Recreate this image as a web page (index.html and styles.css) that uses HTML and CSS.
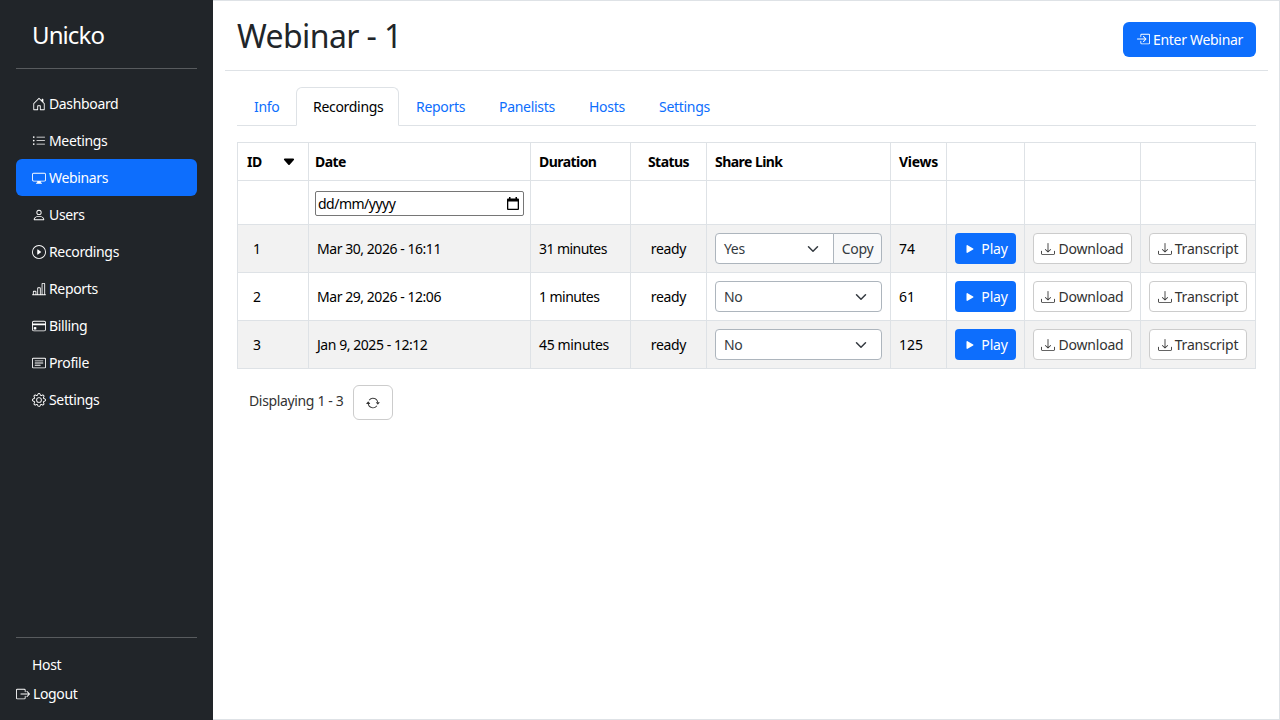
FILE: index.html
```html
<!DOCTYPE html>
<html lang="en">
<head>
<meta charset="utf-8">
<title>Unicko</title>
<link rel="stylesheet" href="styles.css">
</head>
<body>
<svg class="defs" width="0" height="0">
<symbol id="house" viewBox="0 0 16 16"><path d="M8.354 1.146a.5.5 0 0 0-.708 0l-6 6A.5.5 0 0 0 1.5 7.5v7a.5.5 0 0 0 .5.5h4.500a.5.5 0 0 0 .5-.5v-4h2v4a.5.5 0 0 0 .5.5H14a.5.5 0 0 0 .5-.5v-7a.5.5 0 0 0-.146-.354L13 5.793V2.500a.5.5 0 0 0-.5-.5h-1a.5.5 0 0 0-.5.5v1.293zM2.500 14V7.707l5.500-5.500 5.500 5.500V14H10v-4a.5.5 0 0 0-.5-.5h-3a.5.5 0 0 0-.5.5v4z"/></symbol>
<symbol id="list" viewBox="0 0 16 16"><path d="M5 11.500a.5.5 0 0 1 .5-.5h9a.5.5 0 0 1 0 1h-9a.5.5 0 0 1-.5-.5m0-4a.5.5 0 0 1 .5-.5h9a.5.5 0 0 1 0 1h-9a.5.5 0 0 1-.5-.5m0-4a.5.5 0 0 1 .5-.5h9a.5.5 0 0 1 0 1h-9a.5.5 0 0 1-.5-.5m-3 1a1 1 0 1 0 0-2 1 1 0 0 0 0 2m0 4a1 1 0 1 0 0-2 1 1 0 0 0 0 2m0 4a1 1 0 1 0 0-2 1 1 0 0 0 0 2"/></symbol>
<symbol id="display" viewBox="0 0 16 16"><path d="M0 4s0-2 2-2h12s2 0 2 2v6s0 2-2 2h-4q0 1 .25 1.500H11a.5.5 0 0 1 0 1H5a.5.5 0 0 1 0-1h.75Q6 13 6 12H2s-2 0-2-2zm1.398-.855a.76.76 0 0 0-.254.302A1.460 1.460 0 0 0 1 4.010V10c0 .325.078.502.145.602q.105.156.302.254a1.500 1.500 0 0 0 .538.143L2.010 11H14c.325 0 .502-.078.602-.145a.76.76 0 0 0 .254-.302 1.460 1.460 0 0 0 .143-.538L15 9.990V4c0-.325-.078-.502-.145-.602a.76.76 0 0 0-.302-.254A1.460 1.460 0 0 0 13.990 3H2c-.325 0-.502.078-.602.145"/></symbol>
<symbol id="person" viewBox="0 0 16 16"><path d="M8 8a3 3 0 1 0 0-6 3 3 0 0 0 0 6m2-3a2 2 0 1 1-4 0 2 2 0 0 1 4 0m4 8c0 1-1 1-1 1H3s-1 0-1-1 1-4 6-4 6 3 6 4m-1-.004c-.001-.246-.154-.986-.832-1.664C11.516 10.680 10.289 10 8 10s-3.516.68-4.168 1.332c-.678.678-.83 1.418-.832 1.664z"/></symbol>
<symbol id="playc" viewBox="0 0 16 16"><path d="M8 15A7 7 0 1 1 8 1a7 7 0 0 1 0 14m0 1A8 8 0 1 0 8 0a8 8 0 0 0 0 16"/><path d="M6.271 5.055a.5.5 0 0 1 .52.038l3.500 2.500a.5.5 0 0 1 0 .814l-3.500 2.500A.5.5 0 0 1 6 10.500v-5a.5.5 0 0 1 .271-.445"/></symbol>
<symbol id="bars" viewBox="0 0 16 16"><path d="M11 2a1 1 0 0 1 1-1h2a1 1 0 0 1 1 1v12h.5a.5.5 0 0 1 0 1H.5a.5.5 0 0 1 0-1H1v-3a1 1 0 0 1 1-1h2a1 1 0 0 1 1 1v3h1V7a1 1 0 0 1 1-1h2a1 1 0 0 1 1 1v7h1zm1 12h2V2h-2zm-3 0V7H7v7zm-5 0v-3H2v3z"/></symbol>
<symbol id="card" viewBox="0 0 16 16"><path d="M0 4a2 2 0 0 1 2-2h12a2 2 0 0 1 2 2v8a2 2 0 0 1-2 2H2a2 2 0 0 1-2-2zm2-1a1 1 0 0 0-1 1v1h14V4a1 1 0 0 0-1-1zm13 4H1v5a1 1 0 0 0 1 1h12a1 1 0 0 0 1-1z"/><path d="M2 10a1 1 0 0 1 1-1h1a1 1 0 0 1 1 1v1a1 1 0 0 1-1 1H3a1 1 0 0 1-1-1z"/></symbol>
<symbol id="text" viewBox="0 0 16 16"><path d="M14.500 3a.5.5 0 0 1 .5.5v9a.5.5 0 0 1-.5.5h-13a.5.5 0 0 1-.5-.5v-9a.5.5 0 0 1 .5-.5zm-13-1A1.500 1.500 0 0 0 0 3.500v9A1.500 1.500 0 0 0 1.500 14h13a1.500 1.500 0 0 0 1.500-1.500v-9A1.500 1.500 0 0 0 14.500 2z"/><path d="M3 5.500a.5.5 0 0 1 .5-.5h9a.5.5 0 0 1 0 1h-9a.5.5 0 0 1-.5-.5M3 8a.5.5 0 0 1 .5-.5h9a.5.5 0 0 1 0 1h-9A.5.5 0 0 1 3 8m0 2.500a.5.5 0 0 1 .5-.5h6a.5.5 0 0 1 0 1h-6a.5.5 0 0 1-.5-.5"/></symbol>
<symbol id="gear" viewBox="0 0 16 16"><path d="M8 4.754a3.246 3.246 0 1 0 0 6.492 3.246 3.246 0 0 0 0-6.492M5.754 8a2.246 2.246 0 1 1 4.492 0 2.246 2.246 0 0 1-4.492 0"/><path d="M9.796 1.343c-.527-1.790-3.065-1.790-3.592 0l-.094.319a.873.873 0 0 1-1.255.52l-.292-.16c-1.640-.892-3.433.902-2.540 2.541l.159.292a.873.873 0 0 1-.52 1.255l-.319.094c-1.790.527-1.790 3.065 0 3.592l.319.094a.873.873 0 0 1 .52 1.255l-.16.292c-.892 1.640.901 3.434 2.541 2.540l.292-.159a.873.873 0 0 1 1.255.52l.094.319c.527 1.790 3.065 1.790 3.592 0l.094-.319a.873.873 0 0 1 1.255-.52l.292.16c1.640.893 3.434-.902 2.540-2.541l-.159-.292a.873.873 0 0 1 .52-1.255l.319-.094c1.790-.527 1.790-3.065 0-3.592l-.319-.094a.873.873 0 0 1-.52-1.255l.16-.292c.893-1.640-.902-3.433-2.541-2.540l-.292.159a.873.873 0 0 1-1.255-.52zm-2.633.283c.246-.835 1.428-.835 1.674 0l.094.319a1.873 1.873 0 0 0 2.693 1.115l.291-.16c.764-.415 1.600.42 1.184 1.185l-.159.292a1.873 1.873 0 0 0 1.116 2.692l.318.094c.835.246.835 1.428 0 1.674l-.319.094a1.873 1.873 0 0 0-1.115 2.693l.16.291c.415.764-.42 1.600-1.185 1.184l-.291-.159a1.873 1.873 0 0 0-2.693 1.116l-.094.318c-.246.835-1.428.835-1.674 0l-.094-.319a1.873 1.873 0 0 0-2.692-1.115l-.292.16c-.764.415-1.600-.42-1.184-1.185l.159-.291A1.873 1.873 0 0 0 1.945 8.930l-.319-.094c-.835-.246-.835-1.428 0-1.674l.319-.094A1.873 1.873 0 0 0 3.060 4.377l-.16-.292c-.415-.764.42-1.600 1.185-1.184l.292.159a1.873 1.873 0 0 0 2.692-1.115z"/></symbol>
<symbol id="out" viewBox="0 0 16 16"><path d="M10 12.500a.5.5 0 0 1-.5.5h-8a.5.5 0 0 1-.5-.5v-9a.5.5 0 0 1 .5-.5h8a.5.5 0 0 1 .5.5v2a.5.5 0 0 0 1 0v-2A1.500 1.500 0 0 0 9.500 2h-8A1.500 1.500 0 0 0 0 3.500v9A1.500 1.500 0 0 0 1.500 14h8a1.500 1.500 0 0 0 1.500-1.500v-2a.5.5 0 0 0-1 0z"/><path d="M15.854 8.354a.5.5 0 0 0 0-.708l-3-3a.5.5 0 0 0-.708.708L14.293 7.500H5.500a.5.5 0 0 0 0 1h8.793l-2.147 2.146a.5.5 0 0 0 .708.708z"/></symbol>
<symbol id="in" viewBox="0 0 16 16"><path d="M6 3.500a.5.5 0 0 1 .5-.5h8a.5.5 0 0 1 .5.5v9a.5.5 0 0 1-.5.5h-8a.5.5 0 0 1-.5-.5v-2a.5.5 0 0 0-1 0v2A1.500 1.500 0 0 0 6.500 14h8a1.500 1.500 0 0 0 1.500-1.500v-9A1.500 1.500 0 0 0 14.500 2h-8A1.500 1.500 0 0 0 5 3.500v2a.5.5 0 0 0 1 0z"/><path d="M11.854 8.354a.5.5 0 0 0 0-.708l-3-3a.5.5 0 1 0-.708.708L10.293 7.500H1.500a.5.5 0 0 0 0 1h8.793l-2.147 2.146a.5.5 0 0 0 .708.708z"/></symbol>
<symbol id="play" viewBox="0 0 16 16"><path d="m11.596 8.697-6.363 3.692c-.54.313-1.233-.066-1.233-.697V4.308c0-.63.692-1.010 1.233-.696l6.363 3.692a.802.802 0 0 1 0 1.393"/></symbol>
<symbol id="down" viewBox="0 0 16 16"><path d="M.5 9.900a.5.5 0 0 1 .5.5v2.500a1 1 0 0 0 1 1h12a1 1 0 0 0 1-1v-2.500a.5.5 0 0 1 1 0v2.500a2 2 0 0 1-2 2H2a2 2 0 0 1-2-2v-2.500a.5.5 0 0 1 .5-.5"/><path d="M7.646 11.854a.5.5 0 0 0 .708 0l3-3a.5.5 0 0 0-.708-.708L8.500 10.293V1.500a.5.5 0 0 0-1 0v8.793L5.354 8.146a.5.5 0 1 0-.708.708z"/></symbol>
<symbol id="repeat" viewBox="0 0 16 16"><path d="M11.534 7h3.932a.25.25 0 0 1 .192.410l-1.966 2.360a.25.25 0 0 1-.384 0l-1.966-2.360a.25.25 0 0 1 .192-.410m-11 2h3.932a.25.25 0 0 0 .192-.410L2.692 6.230a.25.25 0 0 0-.384 0L.342 8.590A.25.25 0 0 0 .534 9"/><path d="M8 3c-1.552 0-2.940.707-3.857 1.818a.5.5 0 1 1-.771-.636A6.002 6.002 0 0 1 13.917 7H12.900A5 5 0 0 0 8 3M3.100 9a5.002 5.002 0 0 0 8.757 2.182.5.5 0 1 1 .771.636A6.002 6.002 0 0 1 2.083 9z"/></symbol>
<symbol id="chev" viewBox="0 0 16 16"><path fill="none" stroke="#343a40" stroke-linecap="round" stroke-linejoin="round" stroke-width="2" d="m2 5 6 6 6-6"/></symbol>
<symbol id="caret" viewBox="0 0 16 16"><path d="M7.247 11.140 2.451 5.658C1.885 5.013 2.345 4 3.204 4h9.592a1 1 0 0 1 .753 1.659l-4.796 5.480a1 1 0 0 1-1.506 0z"/></symbol>
<symbol id="cal" viewBox="0 0 12 13"><path d="M2 0h1.500v1.500h5V0H10v1.500h1a1 1 0 0 1 1 1V12a1 1 0 0 1-1 1H1a1 1 0 0 1-1-1V2.500a1 1 0 0 1 1-1h1zM1.300 4.500v7.200h9.400V4.500z"/></symbol>
</svg>
<div class="app">
<aside class="sidebar">
<a class="brand">Unicko</a>
<nav class="menu">
<a class="item"><svg class="ic"><use href="#house"/></svg><span>Dashboard</span></a>
<a class="item"><svg class="ic"><use href="#list"/></svg><span>Meetings</span></a>
<a class="item active"><svg class="ic"><use href="#display"/></svg><span>Webinars</span></a>
<a class="item"><svg class="ic"><use href="#person"/></svg><span>Users</span></a>
<a class="item"><svg class="ic"><use href="#playc"/></svg><span>Recordings</span></a>
<a class="item"><svg class="ic"><use href="#bars"/></svg><span>Reports</span></a>
<a class="item"><svg class="ic"><use href="#card"/></svg><span>Billing</span></a>
<a class="item"><svg class="ic"><use href="#text"/></svg><span>Profile</span></a>
<a class="item"><svg class="ic"><use href="#gear"/></svg><span>Settings</span></a>
</nav>
<div class="account"><div class="host">Host</div><a class="logout"><svg class="ic"><use href="#out"/></svg><span>Logout</span></a></div>
</aside>
<main class="main">
<header class="head"><h1>Webinar - 1</h1><a class="btn enter"><svg class="ic"><use href="#in"/></svg><span>Enter Webinar</span></a></header>
<div class="content">
<div class="tabs"><a class="tab t-info">Info</a><a class="tab on">Recordings</a><a class="tab t-reports">Reports</a><a class="tab t-panel">Panelists</a><a class="tab t-hosts">Hosts</a><a class="tab">Settings</a></div>
<table class="grid">
<colgroup><col class="c1"><col class="c2"><col class="c3"><col class="c4"><col class="c5"><col class="c6"><col class="c7"><col class="c8"><col class="c9"></colgroup>
<tr class="titles"><th class="idh"><div class="sort"><span>ID</span><svg class="caret"><use href="#caret"/></svg></div></th><th class="dateh">Date</th><th>Duration</th><th class="mid">Status</th><th>Share Link</th><th class="vh">Views</th><th></th><th></th><th></th></tr>
<tr class="filters"><td></td><td class="dateh"><div class="date"><span>dd/mm/yyyy</span><svg class="cal"><use href="#cal"/></svg></div></td><td></td><td></td><td></td><td></td><td></td><td></td><td></td></tr>
<tr class="row odd"><td class="id">1</td><td class="when">Mar 30, 2026 - 16:11</td><td class="dur">31 minutes</td><td class="mid">ready</td><td><div class="share"><div class="select"><span>Yes</span><svg class="chev"><use href="#chev"/></svg></div><a class="copy">Copy</a></div></td><td class="num">74</td><td><a class="btn play"><svg class="ic"><use href="#play"/></svg><span>Play</span></a></td><td><a class="btn line"><svg class="ic"><use href="#down"/></svg><span>Download</span></a></td><td><a class="btn line"><svg class="ic"><use href="#down"/></svg><span>Transcript</span></a></td></tr>
<tr class="row"><td class="id">2</td><td class="when">Mar 29, 2026 - 12:06</td><td class="dur">1 minutes</td><td class="mid">ready</td><td><div class="share"><div class="select"><span>No</span><svg class="chev"><use href="#chev"/></svg></div></div></td><td class="num">61</td><td><a class="btn play"><svg class="ic"><use href="#play"/></svg><span>Play</span></a></td><td><a class="btn line"><svg class="ic"><use href="#down"/></svg><span>Download</span></a></td><td><a class="btn line"><svg class="ic"><use href="#down"/></svg><span>Transcript</span></a></td></tr>
<tr class="row odd"><td class="id">3</td><td class="when">Jan 9, 2025 - 12:12</td><td class="dur wide">45 minutes</td><td class="mid">ready</td><td><div class="share"><div class="select"><span>No</span><svg class="chev"><use href="#chev"/></svg></div></div></td><td class="num">125</td><td><a class="btn play"><svg class="ic"><use href="#play"/></svg><span>Play</span></a></td><td><a class="btn line"><svg class="ic"><use href="#down"/></svg><span>Download</span></a></td><td><a class="btn line"><svg class="ic"><use href="#down"/></svg><span>Transcript</span></a></td></tr>
</table>
<div class="pager"><span class="count">Displaying 1 - 3</span><a class="refresh"><svg class="ic"><use href="#repeat"/></svg></a></div>
</div>
</main>
</div>
</body>
</html>
```

FILE: styles.css
```css
* { box-sizing: border-box; }
body { margin: 0; font-family: "Noto Sans", sans-serif; font-size: 14px; line-height: 21px; letter-spacing: -0.35px; color: #212529; background: #fff; }
.defs { display: block; height: 0; }
.app { display: flex; height: 720px; }
.ic { width: 14px; height: 14px; fill: currentColor; flex: none; }
span { white-space: nowrap; }
.sidebar { width: 213px; flex: none; background: #212529; color: #fff; padding: 16px; display: flex; flex-direction: column; }
.brand { height: 53px; padding-left: 16px; font-size: 24px; line-height: 37px; letter-spacing: -0.9px; border-bottom: 1px solid #585b5e; }
.menu { padding-top: 16px; flex: 1; }
.item { display: flex; align-items: center; gap: 3px; height: 37px; padding: 0 16px; border-radius: 6px; }
.active { background: #0d6efd; }
.account { border-top: 1px solid #585b5e; height: 67px; padding-top: 16px; }
.host { padding-left: 16px; }
.logout { display: flex; align-items: center; gap: 3px; margin-top: 8px; }
.main { flex: 1; min-width: 0; border: 1px solid #dee2e6; border-left: 0; padding: 0 11px 0 12px; }
.head { height: 70px; border-bottom: 1px solid #dee2e6; padding: 0 12px; display: flex; justify-content: space-between; align-items: center; }
h1 { font-size: 32px; line-height: 40px; font-weight: 400; letter-spacing: -0.6px; margin: 0; }
.btn { display: flex; align-items: center; justify-content: center; gap: 3px; height: 31px; border-radius: 4px; letter-spacing: -0.2px; }
.enter { width: 133px; height: 35px; border-radius: 6px; color: #fff; background: #0d6efd; margin-top: 7px; letter-spacing: -0.3px; }
.content { padding: 16px 12px; }
.tabs { display: flex; height: 39px; border-bottom: 1px solid #dee2e6; }
.tab { height: 39px; padding: 8px 16px; border: 1px solid transparent; color: #0d6efd; letter-spacing: -0.3px; }
.on { width: 103px; color: #000; background: #fff; border-color: #dee2e6 #dee2e6 #fff; border-radius: 6px 6px 0 0; }
.t-info { width: 59px; }
.t-reports { width: 83px; }
.t-panel { width: 90px; }
.t-hosts { width: 70px; }
.grid { width: 1019px; margin-top: 16px; table-layout: fixed; border-collapse: collapse; color: #000; }
.c1 { width: 71px; } .c2 { width: 222px; } .c3 { width: 100px; } .c4 { width: 76px; } .c5 { width: 184px; } .c6 { width: 56px; } .c7 { width: 78px; } .c8 { width: 116px; } .c9 { width: 115px; }
th, td { border: 1px solid #dee2e6; padding: 0 8px; text-align: left; white-space: nowrap; }
th { font-weight: 700; letter-spacing: -0.55px; }
.vh { letter-spacing: -0.3px; }
.titles { height: 38px; }
.filters { height: 44px; }
.row { height: 48px; }
.odd { background: #f2f2f2; }
.mid { text-align: center; }
.idh { padding: 0 12px 0 9px; }
.id { padding-left: 15px; }
.when { letter-spacing: -0.45px; }
.dur { letter-spacing: -0.55px; }
.wide { letter-spacing: -0.35px; }
.num { letter-spacing: 0; }
.dateh { padding: 0 6px; }
.sort { display: flex; justify-content: space-between; align-items: center; }
.caret { width: 14px; height: 14px; }
.date { height: 25px; width: 209px; border: 1px solid #767676; border-radius: 2px; padding: 0 4px 0 2px; display: flex; align-items: center; justify-content: space-between; margin-top: 2px; letter-spacing: -0.5px; }
.cal { width: 12px; height: 13px; }
.share { display: flex; height: 31px; color: #343a40; }
.select { flex: 1; display: flex; align-items: center; justify-content: space-between; background: #fff; border: 1px solid #adb5bd; border-radius: 4px; padding: 0 14px 0 8px; }
.select:not(:last-child) { border-radius: 4px 0 0 4px; }
.chev { width: 12px; height: 12px; }
.copy { width: 49px; margin-left: -1px; border: 1px solid #adb5bd; border-radius: 0 4px 4px 0; background: #f8f9fa; display: flex; align-items: center; justify-content: center; }
.play { background: #0d6efd; color: #fff; width: 61px; gap: 4px; }
.line { background: #fff; border: 1px solid #ccc; color: #333; }
.pager { display: flex; padding: 16px 12px; line-height: 32px; color: #333; }
.count { width: 104px; }
.refresh { width: 40px; height: 35px; border: 1px solid #ccc; border-radius: 6px; display: flex; align-items: center; justify-content: center; }
```
